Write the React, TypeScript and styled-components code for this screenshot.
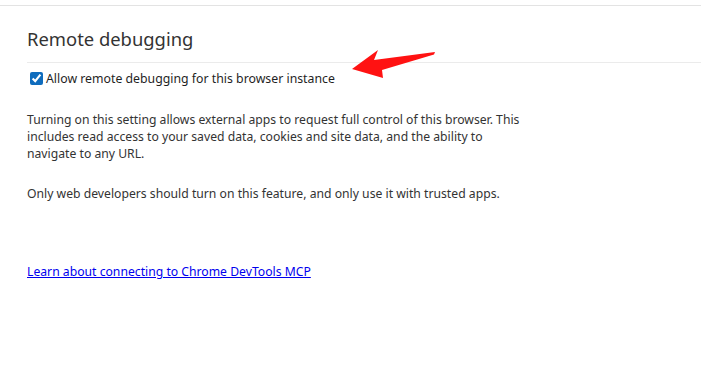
import React from "react";
import styled, { createGlobalStyle } from "styled-components";

const GlobalStyle = createGlobalStyle`
  html, body {
    margin: 0;
    padding: 0;
    background: #ffffff;
  }
  body {
    font-family: "Noto Sans", "Open Sans", sans-serif;
    color: #1f1f1f;
  }
`;

const Page = styled.div`
  position: relative;
  width: 701px;
  height: 365px;
  overflow: hidden;
  border-top: 1px solid #e3e3e3;
  margin-top: 5px;
  box-sizing: border-box;
`;

const Section = styled.section`
  padding: 0 0 0 27px;
`;

const Heading = styled.h2`
  margin: 0;
  padding: 21px 0 11px;
  font-size: 18.4px;
  font-weight: 400;
  line-height: 24px;
  color: #333333;
  border-bottom: 1px solid #ebebeb;
`;

const CheckRow = styled.label`
  display: flex;
  align-items: center;
  gap: 3px;
  margin: 7px 0 0 3px;
  font-size: 12.3px;
  color: #1f1f1f;
`;

const Check = styled.input`
  width: 13px;
  height: 13px;
  margin: 0;
  accent-color: #0f6cbd;
`;

const Body = styled.div`
  width: 496px;
  padding-top: 24px;
`;

const Para = styled.p`
  margin: 0 0 23px;
  font-size: 12.2px;
  line-height: 17px;
  color: #333333;
`;

const Link = styled.a`
  display: inline-block;
  margin-top: 38px;
  font-size: 12.2px;
  line-height: 17px;
  color: #0000ee;
  text-decoration: underline;
`;

const Arrow = styled.svg`
  position: absolute;
  left: 0;
  top: -6px;
  pointer-events: none;
`;

export default function App() {
  return (
    <>
      <GlobalStyle />
      <Page>
        <Section>
          <Heading>Remote debugging</Heading>
          <CheckRow>
            <Check type="checkbox" defaultChecked />
            Allow remote debugging for this browser instance
          </CheckRow>
          <Body>
            <Para>
              Turning on this setting allows external apps to request full
              control of this browser. This includes read access to your saved
              data, cookies and site data, and the ability to navigate to any
              URL.
            </Para>
            <Para>
              Only web developers should turn on this feature, and only use it
              with trusted apps.
            </Para>
          </Body>
          <Link href="#">Learn about connecting to Chrome DevTools MCP</Link>
        </Section>
        <Arrow width="701" height="100" viewBox="0 0 701 100">
          <polygon
            points="352,69 378,50 374,60 435,52 434,54.5 382,70 383,78"
            fill="#ff1212"
          />
        </Arrow>
      </Page>
    </>
  );
}
